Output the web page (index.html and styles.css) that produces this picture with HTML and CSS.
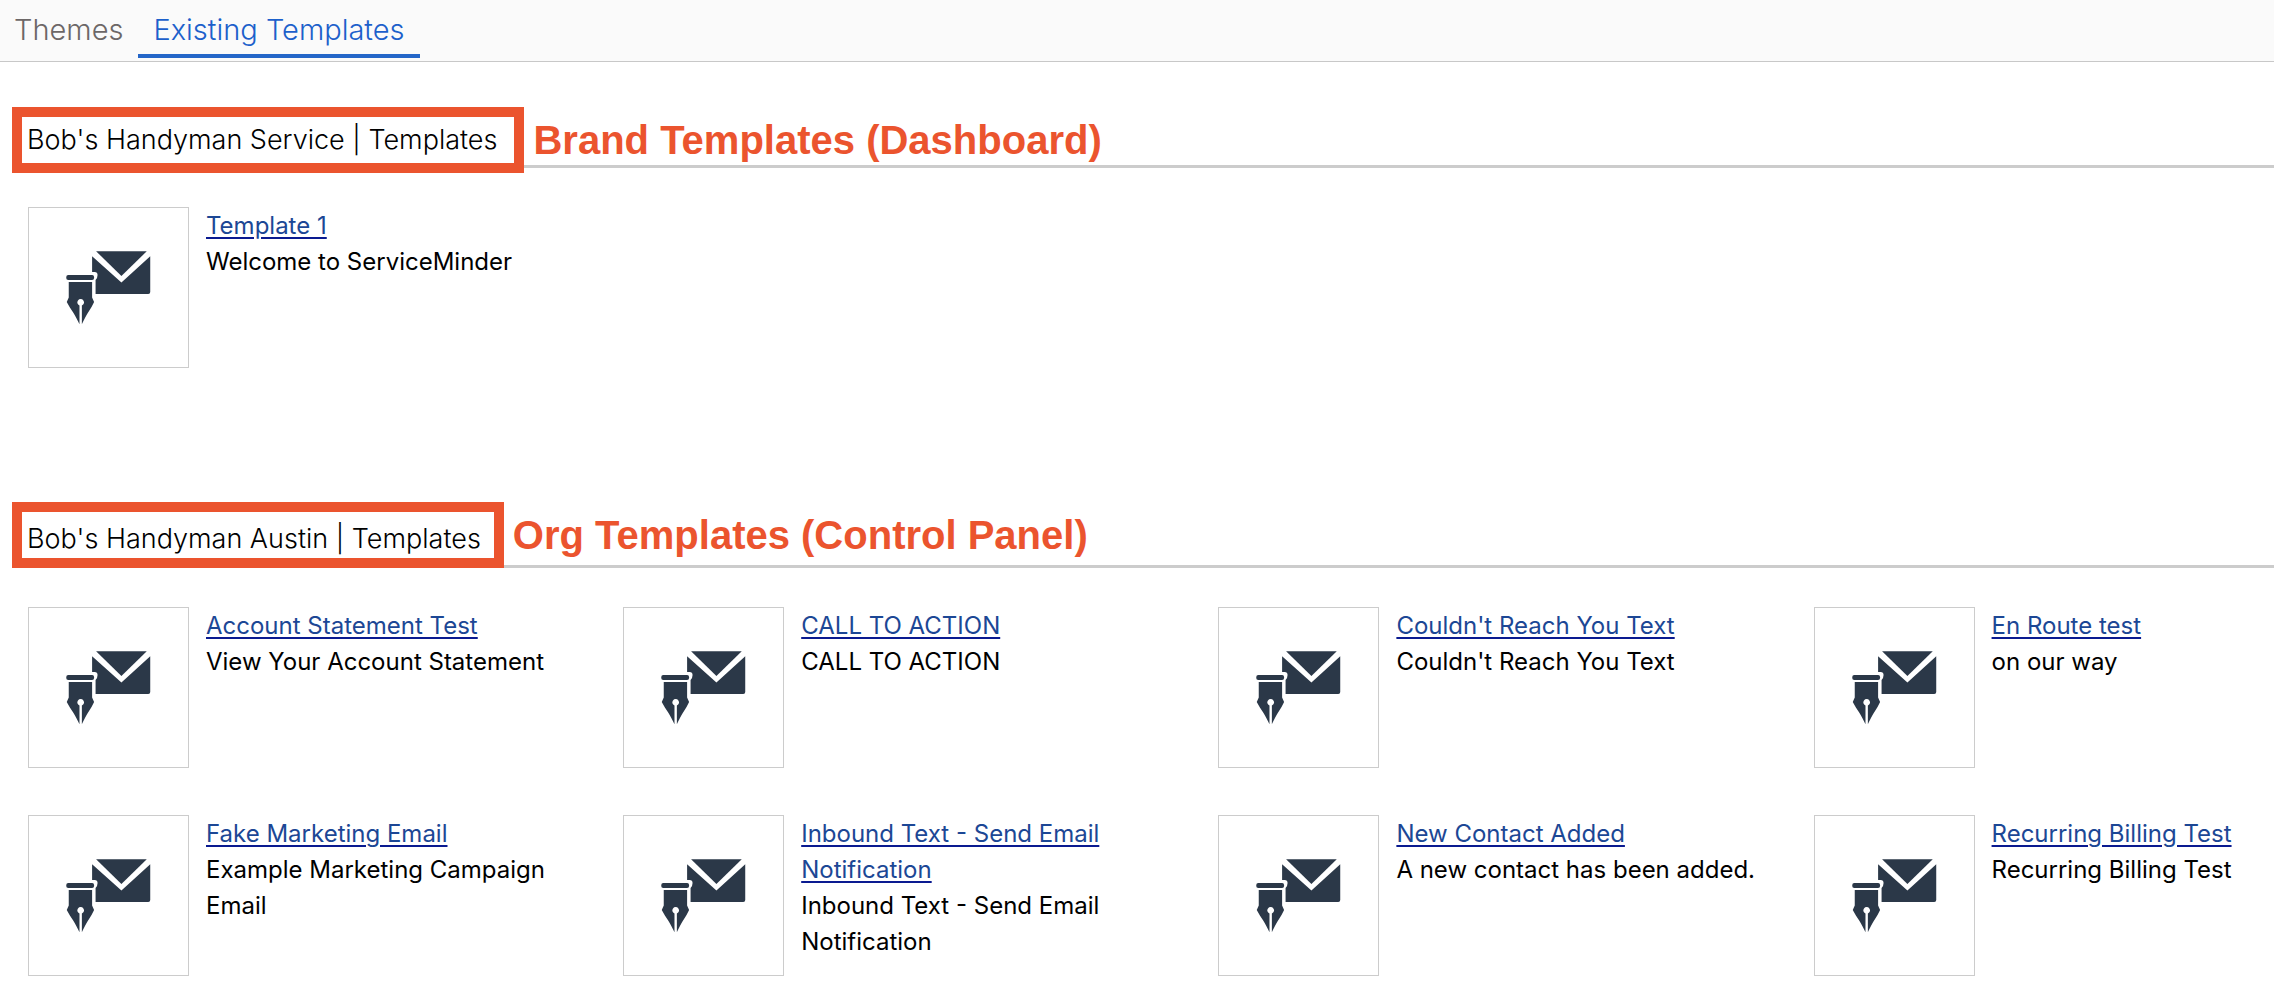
FILE: index.html
```html
<!DOCTYPE html>
<html lang="en">
<head>
    <meta charset="UTF-8">
    <meta name="viewport" content="width=device-width, initial-scale=1.0">
    <title>Existing Templates</title>
    <link rel="stylesheet" href="styles.css">
</head>
<body>
    <!-- envelope and pen, reused by every template -->
    <svg class="sprite" width="0" height="0" aria-hidden="true">
        <symbol id="mail-pen" viewBox="0 0 160 160">
            <path d="M67.5 43.5H118.5L93 68.5Z"/>
            <path d="M63.5 48.5L93 75L122 48.5V84.5Q122 86.5 120 86.5H67V72.500Q69 70.500 69 67.500T66 64.500H63.5Z"/>
            <rect x="37.500" y="67.500" width="28" height="5" rx="2"/>
            <path d="M40 74.500H63.500V90L65.500 94.500C62 102 57 108 53.200 117V98.200A3.400 3.400 0 1 0 50.800 98.200V117C47 108 42 102 38 94.500L40 90Z"/>
        </symbol>
    </svg>

    <nav class="tabs">
        <a class="tab" href="#themes">Themes</a>
        <a class="tab active" href="#templates">Existing Templates</a>
    </nav>

    <main>
        <section class="section">
            <div class="heading brand">
                <h2>Bob's Handyman Service | Templates</h2>
                <span class="note">Brand Templates (Dashboard)</span>
            </div>
            <div class="templates">
                <div class="template">
                    <div class="thumb"><svg><use href="#mail-pen"/></svg></div>
                    <div class="info"><a href="#">Template 1</a><p>Welcome to ServiceMinder</p></div>
                </div>
            </div>
        </section>

        <section class="section">
            <div class="heading org">
                <h2>Bob's Handyman Austin | Templates</h2>
                <span class="note">Org Templates (Control Panel)</span>
            </div>
            <div class="templates">
                <div class="template">
                    <div class="thumb"><svg><use href="#mail-pen"/></svg></div>
                    <div class="info"><a href="#">Account Statement Test</a><p>View Your Account Statement</p></div>
                </div>
                <div class="template">
                    <div class="thumb"><svg><use href="#mail-pen"/></svg></div>
                    <div class="info"><a href="#">CALL TO ACTION</a><p>CALL TO ACTION</p></div>
                </div>
                <div class="template">
                    <div class="thumb"><svg><use href="#mail-pen"/></svg></div>
                    <div class="info"><a href="#">Couldn't Reach You Text</a><p>Couldn't Reach You Text</p></div>
                </div>
                <div class="template">
                    <div class="thumb"><svg><use href="#mail-pen"/></svg></div>
                    <div class="info"><a href="#">En Route test</a><p>on our way</p></div>
                </div>
                <div class="template">
                    <div class="thumb"><svg><use href="#mail-pen"/></svg></div>
                    <div class="info"><a href="#">Fake Marketing Email</a><p>Example Marketing Campaign Email</p></div>
                </div>
                <div class="template">
                    <div class="thumb"><svg><use href="#mail-pen"/></svg></div>
                    <div class="info"><a href="#">Inbound Text - Send Email Notification</a><p>Inbound Text - Send Email Notification</p></div>
                </div>
                <div class="template">
                    <div class="thumb"><svg><use href="#mail-pen"/></svg></div>
                    <div class="info"><a href="#">New Contact Added</a><p>A new contact has been added.</p></div>
                </div>
                <div class="template">
                    <div class="thumb"><svg><use href="#mail-pen"/></svg></div>
                    <div class="info"><a href="#">Recurring Billing Test</a><p>Recurring Billing Test</p></div>
                </div>
            </div>
        </section>
    </main>
</body>
</html>
```
FILE: styles.css
```css
* {
    box-sizing: border-box;
}

body {
    margin: 0;
    background-color: #fff;
    color: #000;
    font-family: Inter, "Liberation Sans", sans-serif;
    font-size: 24px;
    font-weight: 400;
    line-height: 36px;
}

h2, p {
    margin: 0;
}

.sprite {
    position: absolute;
}

.tabs {
    display: flex;
    height: 62px;
    background-color: #fafafa;
    border-bottom: 1px solid #c8c8c8;
}

.tab {
    height: 58px;
    padding: 12px 15px 0 14px;
    color: #6c6767;
    font-size: 29px;
    font-weight: 300;
    text-decoration: none;
}

.tab.active {
    padding: 12px 15px 0;
    color: #1c60cb;
    border-bottom: 4px solid #2466c8;
}

.section {
    padding-top: 45px;
}

.section + .section {
    margin-top: 89px;
}

.heading {
    display: flex;
    align-items: flex-start;
    gap: 9px;
    margin-left: 12px;
    border-bottom: 3px solid #ccc;
}

/* the boxes hang over the rule below them */
.heading.brand {
    height: 61px;
}

.heading.org {
    height: 66px;
}

.heading h2 {
    height: 66px;
    border: 10px solid #eb542e;
    background-color: #fff;
    font-size: 27px;
    font-weight: 300;
    white-space: nowrap;
}

.heading.brand h2 {
    padding: 5px 17px 0 5px;
}

.heading.org h2 {
    padding: 9px 13px 0 5px;
}

.note {
    color: #eb542e;
    font-family: "Liberation Sans", Arial, sans-serif;
    font-size: 40px;
    font-weight: bold;
    line-height: 66px;
    white-space: nowrap;
}

.templates {
    display: grid;
    grid-template-columns: repeat(3, 26.5%) 1fr;
    row-gap: 47px;
    padding: 39px 0 0 28px;
}

.template {
    display: flex;
    gap: 17px;
    padding-right: 32px;
}

.thumb {
    flex: none;
    width: 161px;
    height: 161px;
    border: 1px solid #ccc;
}

.thumb svg {
    display: block;
    width: 100%;
    height: 100%;
    fill: #2b3848;
}

.info {
    padding-top: 1px;
}

.info a {
    color: #1c4795;
    text-decoration: underline;
    text-decoration-color: #0a1a90;
    text-decoration-thickness: 2px;
    text-underline-offset: 3px;
}
```
